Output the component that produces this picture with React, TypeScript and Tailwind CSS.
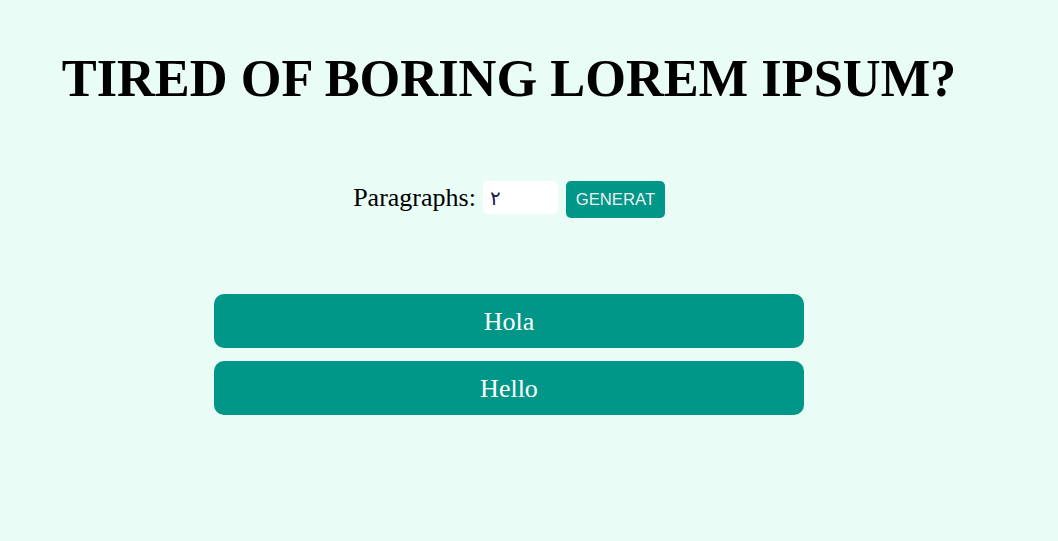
import React from "react";

export default function App() {
  return (
    <div className="min-h-[541px] w-full bg-[#e9fdf6]" style={{ fontFamily: '"Liberation Serif", serif' }}>
      <div className="w-[1018px] flex flex-col items-center">
        <h1 className="mt-[45px] text-[52.4px] leading-[66px] font-bold text-black text-center" style={{ fontFamily: '"Liberation Serif", serif' }}>
          TIRED OF BORING LOREM IPSUM?
        </h1>
        <div className="mt-[70px] flex items-start">
          <label className="text-[26px] leading-[33px] text-black">Paragraphs:</label>
          <div className="ml-[7px] w-[75px] h-[33px] bg-white rounded-[5px] flex items-center pl-[7px] text-[20px] text-[#1a1a4a]" style={{ fontFamily: '"DejaVu Sans", sans-serif' }}>
            ٢
          </div>
          <button className="ml-[8px] w-[99px] h-[37px] bg-[#009688] rounded-[5px] text-[16.7px] text-[#eeeeee]" style={{ fontFamily: '"Liberation Sans", sans-serif' }}>
            GENERAT
          </button>
        </div>
        <div className="mt-[76px] flex flex-col gap-[13px]">
          <div className="w-[590px] h-[54px] bg-[#009688] rounded-[10px] flex items-center justify-center text-white text-[26px]">Hola</div>
          <div className="w-[590px] h-[54px] bg-[#009688] rounded-[10px] flex items-center justify-center text-white text-[26px]">Hello</div>
        </div>
      </div>
    </div>
  );
}
